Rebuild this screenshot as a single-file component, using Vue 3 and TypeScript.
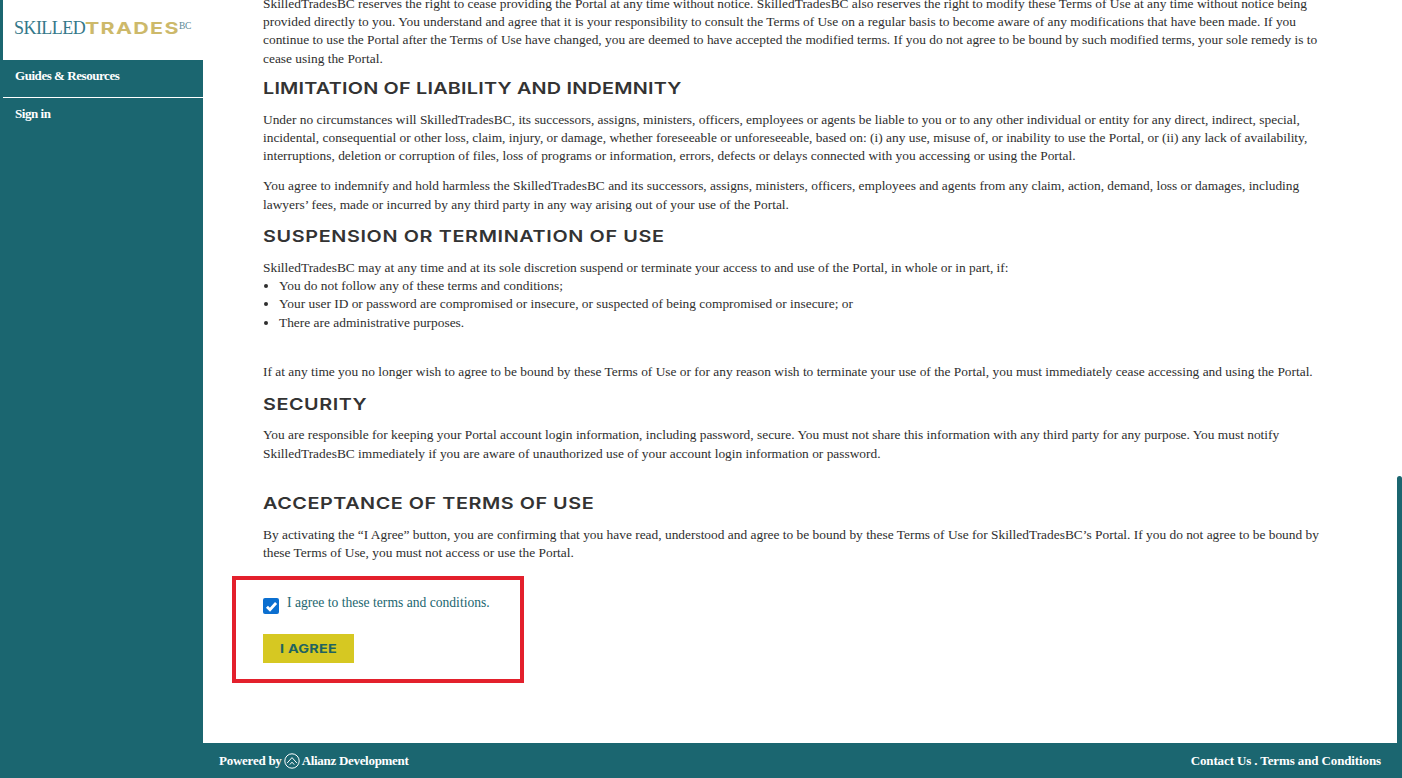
<script setup lang="ts">
const limitation = [
  ['Under no circumstances will SkilledTradesBC, its successors, assigns, ministers, officers, employees or agents be liable to you or to any other individual or entity for any direct, indirect, special,',
   'incidental, consequential or other loss, claim, injury, or damage, whether foreseeable or unforeseeable, based on: (i) any use, misuse of, or inability to use the Portal, or (ii) any lack of availability,',
   'interruptions, deletion or corruption of files, loss of programs or information, errors, defects or delays connected with you accessing or using the Portal.'],
  ['You agree to indemnify and hold harmless the SkilledTradesBC and its successors, assigns, ministers, officers, employees and agents from any claim, action, demand, loss or damages, including',
   'lawyers’ fees, made or incurred by any third party in any way arising out of your use of the Portal.']
]
const intro = [
  'SkilledTradesBC reserves the right to cease providing the Portal at any time without notice. SkilledTradesBC also reserves the right to modify these Terms of Use at any time without notice being',
  'provided directly to you. You understand and agree that it is your responsibility to consult the Terms of Use on a regular basis to become aware of any modifications that have been made. If you',
  'continue to use the Portal after the Terms of Use have changed, you are deemed to have accepted the modified terms. If you do not agree to be bound by such modified terms, your sole remedy is to',
  'cease using the Portal.'
]
const bullets = [
  'You do not follow any of these terms and conditions;',
  'Your user ID or password are compromised or insecure, or suspected of being compromised or insecure; or',
  'There are administrative purposes.'
]
</script>

<template>
  <div class="page">
    <div class="edge"></div>
    <aside class="side">
      <div class="logo"><span class="l1">SKILLED</span><span class="l2">TRADES</span><span class="l3">BC</span></div>
      <nav class="nav">
        <a class="nav-item first">Guides &amp; Resources</a>
        <a class="nav-item">Sign in</a>
      </nav>
    </aside>
    <div class="right">
      <main class="main">
        <div class="content">
          <p class="para" v-for="l in intro" :key="l">{{ l }}</p>
          <h2 class="h h1">LIMITATION OF LIABILITY AND INDEMNITY</h2>
          <div class="block" v-for="(p, i) in limitation" :key="i">
            <p class="para" v-for="l in p" :key="l">{{ l }}</p>
          </div>
          <h2 class="h h2b">SUSPENSION OR TERMINATION OF USE</h2>
          <p class="para">SkilledTradesBC may at any time and at its sole discretion suspend or terminate your access to and use of the Portal, in whole or in part, if:</p>
          <ul class="list"><li v-for="b in bullets" :key="b">{{ b }}</li></ul>
          <p class="para spaced">If at any time you no longer wish to agree to be bound by these Terms of Use or for any reason wish to terminate your use of the Portal, you must immediately cease accessing and using the Portal.</p>
          <h2 class="h h3">SECURITY</h2>
          <p class="para">You are responsible for keeping your Portal account login information, including password, secure. You must not share this information with any third party for any purpose. You must notify</p>
          <p class="para">SkilledTradesBC immediately if you are aware of unauthorized use of your account login information or password.</p>
          <h2 class="h h4">ACCEPTANCE OF TERMS OF USE</h2>
          <p class="para">By activating the “I Agree” button, you are confirming that you have read, understood and agree to be bound by these Terms of Use for SkilledTradesBC’s Portal. If you do not agree to be bound by</p>
          <p class="para">these Terms of Use, you must not access or use the Portal.</p>
          <div class="agree">
            <label class="check">
              <span class="box"><svg width="13" height="13" viewBox="0 0 12 12"><path d="M1.8 6.2 4.6 9 10.2 2.8" fill="none" stroke="#fff" stroke-width="2.6"/></svg></span>
              <span class="check-text">I agree to these terms and conditions.</span>
            </label>
            <button class="btn" type="button"><span class="btn-label">I AGREE</span></button>
          </div>
        </div>
        <div class="scroll"></div>
      </main>
      <footer class="foot">
        <div class="powered"><span class="pw">Powered by</span>
          <svg class="mark" width="16" height="16" viewBox="0 0 16 16"><circle cx="8" cy="8" r="7.2" fill="none" stroke="#fff" stroke-width="1"/><path d="M3 10.2 8 4.6l5 5.6M5.8 11.6 8 9.2l2.2 2.4" fill="none" stroke="#fff" stroke-width="1"/></svg>
          <span class="al">Alianz Development</span></div>
        <div class="links">Contact Us . Terms and Conditions</div>
      </footer>
    </div>
  </div>
</template>

<style>
html, body { margin: 0; padding: 0; overflow: hidden; }
</style>

<style scoped>
.page { display: flex; width: 1402px; height: 778px; overflow: hidden; background: #fff; font-family: "Liberation Serif", serif; color: #333; }
.edge { width: 3px; background: #1b6670; flex: none; }
.side { width: 200px; flex: none; display: flex; flex-direction: column; background: #1b6670; }
.logo { height: 60px; background: #fff; box-sizing: border-box; padding: 14px 0 0 11px; white-space: nowrap; line-height: 24px; }
.l1 { font-size: 18px; color: #34788a; letter-spacing: -0.55px; }
.l2 { display: inline-block; font-family: Inter, sans-serif; font-weight: 700; font-size: 16.5px; color: #cdb96a; letter-spacing: 1px; transform: scaleX(1.3); transform-origin: left center; margin-right: 21px; }
.l3 { font-size: 9.5px; color: #5a8a96; vertical-align: 5px; letter-spacing: -0.4px; }
.nav-item { display: block; color: #fff; font-size: 13px; font-weight: 700; letter-spacing: -0.45px; padding: 0 12px; height: 37px; line-height: 31px; }
.nav-item.first { border-bottom: 1px solid #fff; }
.right { flex: 1; min-width: 0; display: flex; flex-direction: column; }
.main { flex: 1; min-height: 0; position: relative; overflow: hidden; }
.content { padding: 0 0 0 60px; margin-top: -5px; }
.para { margin: 0; font-size: 13.4px; line-height: 18.2px; white-space: nowrap; color: #2e2e2e; }
.block { margin-bottom: 12px; }
.block:last-of-type { margin-bottom: 0; }
.h { margin: 0; font-family: Inter, sans-serif; font-weight: 600; font-size: 16.5px; line-height: 20px; letter-spacing: 0.45px; color: #333; white-space: nowrap; transform: scaleX(1.2); transform-origin: left center; }
.h1 { margin: 10px 0 13px; letter-spacing: 0.18px; }
.h2b { margin: 12px 0 13px; letter-spacing: 0.53px; }
.list { margin: 0; padding: 0 0 0 16px; font-size: 13.4px; line-height: 18.4px; color: #2e2e2e; }
.spaced { margin-top: 31px; }
.h3 { margin: 13px 0 12px; }
.h4 { margin: 30px 0 13px; }
.agree { margin: 14px 0 0 -31px; width: 292px; height: 107px; box-sizing: border-box; border: 4px solid #e3202c; padding: 14px 27px; }
.check { display: flex; gap: 8px; align-items: flex-start; color: #1b6670; font-size: 13.6px; }
.box { width: 16px; height: 16px; border-radius: 2px; background: #0b6fd0; display: flex; align-items: center; justify-content: center; margin-top: 4px; flex: none; }
.check-text { line-height: 18px; }
.btn { margin-top: 20px; display: flex; align-items: center; width: 91px; height: 29px; border: 0; background: #d6c822; color: #1f6360; font-family: Inter, sans-serif; font-weight: 700; font-size: 11.5px; padding: 0 0 0 17px; box-sizing: border-box; }
.btn-label { display: inline-block; white-space: nowrap; letter-spacing: 0.2px; transform: scaleX(1.25); transform-origin: left center; }
.scroll { position: absolute; right: 0; top: 476px; bottom: 0; width: 5px; background: #1b6670; border-radius: 3px 3px 0 0; }
.foot { height: 35px; flex: none; box-sizing: border-box; padding: 1px 21px 0 16px; background: #1b6670; color: #fff; display: flex; justify-content: space-between; align-items: center; font-size: 13px; font-weight: 700; }
.powered { display: flex; align-items: center; gap: 2px; }
.pw { letter-spacing: -0.25px; }
.al { letter-spacing: -0.3px; }
.links { letter-spacing: -0.12px; }
.mark { flex: none; }
</style>
